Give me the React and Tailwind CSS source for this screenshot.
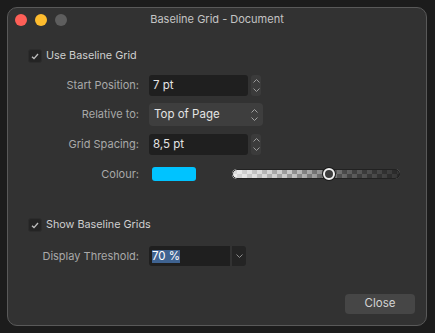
import React from "react";

// tiny chevrons used by the steppers and popups
const Chevron = ({ dir = "up", className = "" }) => (
  <svg width="7" height="4" viewBox="0 0 7 4" className={className}>
    <path
      d={dir === "up" ? "M0.5 3.5 L3.5 0.5 L6.5 3.5" : "M0.5 0.5 L3.5 3.5 L6.5 0.5"}
      fill="none"
      stroke="currentColor"
      strokeWidth="1"
    />
  </svg>
);

const Checkbox = ({ label }) => (
  <div className="flex items-center h-[14px] pl-[20px]">
    <div className="w-[14px] h-[14px] rounded-[3px] bg-[#242424] border border-[#2c2c2c] flex items-center justify-center">
      <svg width="8" height="7" viewBox="0 0 8 7">
        <path d="M1 3.8 L3 5.6 L7 1" fill="none" stroke="#bdbdbd" strokeWidth="1.4" />
      </svg>
    </div>
    <span className="ml-[4px] text-[10.8px] text-[#cfcfcf]">{label}</span>
  </div>
);

const Label = ({ children }) => (
  <div className="w-[131px] text-right text-[11px] text-[#a9a9a9]">{children}</div>
);

const Stepper = () => (
  <div className="ml-[3px] w-[10px] h-[21px] rounded-[3px] bg-[#3b3b3b] flex flex-col items-center justify-center gap-[5px] text-[#9a9a9a]">
    <Chevron dir="up" />
    <Chevron dir="down" />
  </div>
);

const NumberField = ({ value }) => (
  <div className="flex items-center ml-[10px]">
    <div className="w-[99px] h-[21px] rounded-[3px] bg-[#1f1f1f] flex items-center pl-[4px] text-[11.5px] text-[#e4e4e4]">
      {value}
    </div>
    <Stepper />
  </div>
);

export default function App() {
  return (
    <div className="w-[435px] h-[333px] bg-[#1c1c1c] pl-[7px] pt-[7px] font-['Inter',sans-serif] overflow-hidden">
      <div className="w-[420px] h-[319px] rounded-[10px] border border-[#595959] bg-[#323232] flex flex-col">
        {/* title bar */}
        <div className="relative h-[22px] flex items-center">
          <div className="flex items-center gap-[8px] pl-[7px] pt-[1px]">
            <div className="w-[12px] h-[12px] rounded-full bg-[#fe5f57]" />
            <div className="w-[12px] h-[12px] rounded-full bg-[#febc2e]" />
            <div className="w-[12px] h-[12px] rounded-full bg-[#5e5e5e]" />
          </div>
          <div className="absolute inset-0 flex items-center justify-center text-[11px] text-[#c4c4c4] pt-[1px]">
            Baseline Grid - Document
          </div>
        </div>

        <div className="mt-[19px]">
          <Checkbox label="Use Baseline Grid" />
        </div>

        <div className="mt-[12px] flex items-center">
          <Label>Start Position:</Label>
          <NumberField value="7 pt" />
        </div>

        <div className="mt-[7px] flex items-center">
          <Label>Relative to:</Label>
          <div className="ml-[10px] w-[114px] h-[23px] rounded-[4px] bg-[#3e3e3e] flex items-center justify-between pl-[5px] pr-[5px] text-[11.5px] text-[#e4e4e4]">
            <span>Top of Page</span>
            <div className="flex flex-col items-center gap-[4px] text-[#a0a0a0]">
              <Chevron dir="up" />
              <Chevron dir="down" />
            </div>
          </div>
        </div>

        <div className="mt-[8px] flex items-center">
          <Label>Grid Spacing:</Label>
          <NumberField value="8,5 pt" />
        </div>

        <div className="mt-[12px] flex items-center h-[14px]">
          <Label>Colour:</Label>
          <div className="ml-[13px] w-[44px] h-[14px] rounded-[3px] bg-[#00c3ff]" />
          {/* alpha slider */}
          <div className="ml-[36px] relative w-[168px] h-[10px]">
            <div className="absolute inset-0 rounded-full overflow-hidden bg-[conic-gradient(#b8b8b8_25%,#7a7a7a_0_50%,#b8b8b8_0_75%,#7a7a7a_0)] [background-size:10px_10px]">
              <div className="absolute inset-0 bg-[linear-gradient(to_right,rgba(255,255,255,0.75),rgba(255,255,255,0.2)_35%,rgba(20,20,20,0.55)_70%,rgba(20,20,20,0.8))]" />
              <div className="absolute inset-0 rounded-full border border-[#222]" />
            </div>
            <div className="absolute left-[91px] top-[-1px] w-[12px] h-[12px] rounded-full bg-[#3c3c3c] border-[2px] border-[#f0f0f0] shadow-[0_0_0_1px_#1a1a1a]" />
          </div>
        </div>

        <div className="mt-[37px]">
          <Checkbox label="Show Baseline Grids" />
        </div>

        <div className="mt-[14px] flex items-center">
          <Label>Display Threshold:</Label>
          <div className="ml-[10px] flex items-center">
            <div className="w-[81px] h-[20px] rounded-l-[3px] bg-[#1f1f1f] flex items-center pl-[3px] text-[11.5px]">
              <span className="bg-[#3f6391] text-white leading-[13px]">70 %</span>
            </div>
            <div className="ml-[2px] w-[14px] h-[20px] rounded-r-[3px] bg-[#242424] flex items-center justify-center text-[#8c8c8c]">
              <Chevron dir="down" />
            </div>
          </div>
        </div>

        <div className="mt-[28px] flex justify-end pr-[11px]">
          <button className="w-[70px] h-[20px] rounded-[4px] bg-[#464646] text-[11.5px] text-[#d4d4d4]">
            Close
          </button>
        </div>
      </div>
    </div>
  );
}
